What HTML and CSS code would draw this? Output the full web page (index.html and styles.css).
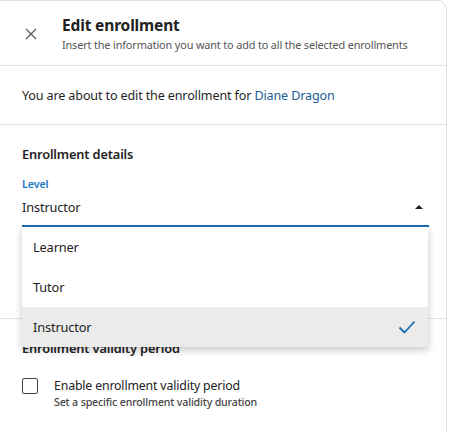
FILE: index.html
```html
<!DOCTYPE html>
<html>
<head>
<meta charset="utf-8">
<link rel="stylesheet" href="styles.css">
</head>
<body>
<div class="panel">
  <header class="header">
    <button class="close" aria-label="Close">
      <svg width="14" height="14" viewBox="0 0 14 14"><path d="M2 2L12 12M12 2L2 12" stroke="#5f5f5f" stroke-width="1.4" fill="none"/></svg>
    </button>
    <div class="titles">
      <h1 class="title">Edit enrollment</h1>
      <p class="subtitle">Insert the information you want to add to all the selected enrollments</p>
    </div>
  </header>
  <section class="intro">
    <p>You are about to edit the enrollment for <a class="link">Diane Dragon</a></p>
  </section>
  <section class="details">
    <h2 class="section-title">Enrollment details</h2>
    <div class="field">
      <label class="field-label">Level</label>
      <div class="select">
        <span>Instructor</span>
        <svg class="caret" width="10" height="6" viewBox="0 0 10 6"><path d="M1 5L5 1L9 5Z" fill="#222"/></svg>
      </div>
      <ul class="menu">
        <li class="opt">Learner</li>
        <li class="opt">Tutor</li>
        <li class="opt selected">Instructor
          <svg width="18" height="14" viewBox="0 0 18 14"><path d="M1.5 7.5L6.5 12.5L16.5 1.5" stroke="#1a6fb5" stroke-width="1.8" fill="none"/></svg>
        </li>
      </ul>
    </div>
  </section>
  <section class="validity">
    <h2 class="section-title">Enrollment validity period</h2>
    <div class="check-row">
      <span class="box"></span>
      <div>
        <div class="check-label">Enable enrollment validity period</div>
        <div class="check-help">Set a specific enrollment validity duration</div>
      </div>
    </div>
  </section>
</div>
</body>
</html>
```
FILE: styles.css
```css
* { box-sizing: border-box; }
html, body { margin: 0; padding: 0; background: #fff; }
body {
  font-family: "Noto Sans", "Open Sans", sans-serif;
  color: #222;
  width: 451px;
  height: 432px;
  overflow: hidden;
  letter-spacing: -0.15px;
}
.panel {
  width: 447px;
  height: 440px;
  border: 1px solid #e3e3e3;
  border-left: none;
  border-top-right-radius: 10px;
  background: #fff;
}
.header {
  display: flex;
  align-items: flex-start;
  height: 65px;
  border-bottom: 1px solid #e3e3e3;
  padding: 14px 0 0 24px;
}
.close {
  border: none;
  background: none;
  padding: 0;
  width: 14px;
  height: 14px;
  margin-top: 12px;
  margin-right: 24px;
  display: flex;
}
.title {
  margin: 0;
  font-size: 15.5px;
  font-weight: 700;
  line-height: 21px;
  color: #222;
}
.subtitle {
  margin: 1px 0 0;
  font-size: 10.9px;
  line-height: 15px;
  color: #555;
}
.intro {
  height: 59px;
  border-bottom: 1px solid #e3e3e3;
  padding: 0 22px;
  display: flex;
  align-items: center;
}
.intro p { margin: 0; font-size: 12.6px; color: #1f1f1f; }
.link { color: #1a5d94; }
.details {
  height: 194px;
  border-bottom: 1px solid #e3e3e3;
  padding: 20px 0 0 22px;
}
.section-title {
  margin: 0;
  font-size: 12.8px;
  font-weight: 600;
  line-height: 18px;
}
.field {
  position: relative;
  width: 407px;
  margin-top: 14px;
}
.field-label {
  display: block;
  font-size: 10.8px;
  line-height: 14px;
  color: #1a7bc0;
  font-weight: 600;
}
.select {
  display: flex;
  justify-content: space-between;
  align-items: center;
  height: 36px;
  padding-bottom: 2px;
  border-bottom: 2px solid #1a6fb5;
  font-size: 12.8px;
  padding-right: 5px;
}
.menu {
  position: absolute;
  left: 0;
  top: 50px;
  width: 406px;
  margin: 0;
  padding: 0;
  list-style: none;
  background: #fff;
  box-shadow: 0 3px 8px rgba(0,0,0,0.22);
  z-index: 2;
}
.opt {
  height: 40px;
  display: flex;
  align-items: center;
  justify-content: space-between;
  padding: 0 12px 0 11px;
  font-size: 12.8px;
}
.opt:first-child { padding-top: 0; }
.opt.selected { background: #ebebeb; }
.validity { padding: 20px 0 0 22px; }
.check-row {
  display: flex;
  align-items: flex-start;
  margin-top: 20px;
  gap: 16px;
}
.box {
  width: 16px;
  height: 16px;
  border: 1px solid #444;
  border-radius: 2px;
  margin-top: 1px;
  flex: none;
}
.check-label { font-size: 12.3px; line-height: 17px; }
.check-help { font-size: 10.6px; line-height: 16px; color: #444; font-weight: 500; }
```
